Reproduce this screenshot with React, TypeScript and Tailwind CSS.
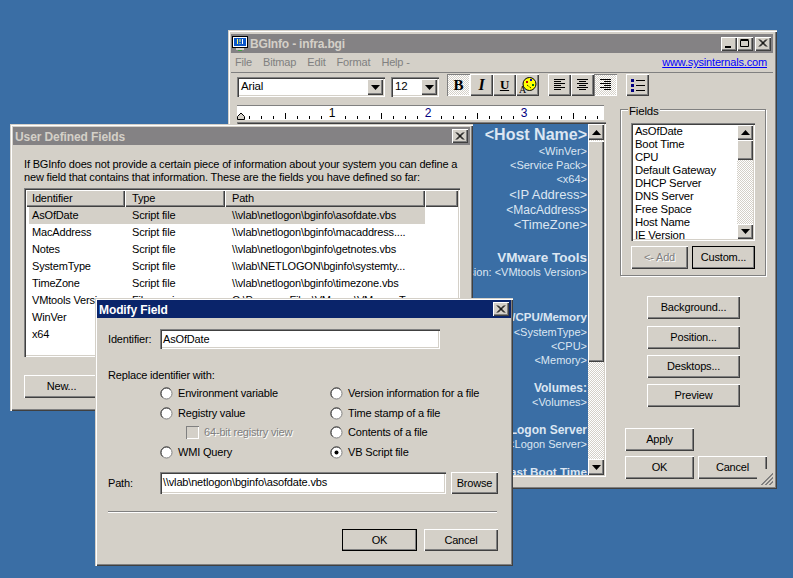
import type { ReactNode } from 'react';

const raised = 'bg-[#d4d0c8] shadow-[inset_1px_1px_0_#fff,inset_-1px_-1px_0_#404040,inset_-2px_-2px_0_#808080]';
const sunken = 'bg-white shadow-[inset_1px_1px_0_#808080,inset_2px_2px_0_#404040,inset_-1px_-1px_0_#fff,inset_-2px_-2px_0_#d4d0c8]';
const frame = 'bg-[#d4d0c8] shadow-[inset_1px_1px_0_#d4d0c8,inset_2px_2px_0_#fff,inset_-1px_-1px_0_#404040,inset_-2px_-2px_0_#808080]';
const dither = 'bg-[repeating-conic-gradient(#d4d0c8_0_25%,#fff_0_50%)] bg-[length:2px_2px]';

function Button({ label, className = '', primary = false, disabled = false }: { label: string; className?: string; primary?: boolean; disabled?: boolean }) {
  return (
    <div className={`flex items-center justify-center ${raised} ${primary ? 'outline outline-1 -outline-offset-1 outline-black' : ''} ${disabled ? 'text-[#808080] [text-shadow:1px_1px_0_#fff]' : ''} ${className}`}>
      {label}
    </div>
  );
}

function Arrow({ down = false }: { down?: boolean }) {
  return (
    <svg width="9" height="5" viewBox="0 0 9 5" className={down ? 'rotate-180' : ''}>
      <path d="M4.5 0 L9 5 L0 5 Z" fill="#000" />
    </svg>
  );
}

function ArrowButton({ down = false, className = '' }: { down?: boolean; className?: string }) {
  return (
    <div className={`flex items-center justify-center ${raised} ${className}`}>
      <Arrow down={down} />
    </div>
  );
}

function Combo({ value, className }: { value: string; className: string }) {
  return (
    <div className={`flex items-center justify-between pl-[4px] pr-[2px] text-[11.5px] ${sunken} ${className}`}>
      <span>{value}</span>
      <ArrowButton down className="w-[16px] h-[16px]" />
    </div>
  );
}

function TitleButton({ kind }: { kind: 'min' | 'max' | 'close' }) {
  return (
    <div className={`flex items-center justify-center w-[16px] h-[14px] ${raised}`}>
      <svg width="10" height="9" viewBox="0 0 10 9" fill="none" stroke="#000">
        {kind === 'min' && <path d="M1 7.5 H7 M1 8.5 H7" />}
        {kind === 'max' && <path d="M0.5 1.5 H8.5 V7.5 H0.5 Z M0.5 0.5 H8.5" />}
        {kind === 'close' && <path d="M1 0.5 L8 7.5 M2 0.5 L9 7.5 M8 0.5 L1 7.5 M9 0.5 L2 7.5" />}
      </svg>
    </div>
  );
}

function TitleBar({ title, active = false }: { title: string; active?: boolean }) {
  return (
    <div className={`flex items-center h-[18px] pl-[2px] pr-[2px] ${active ? 'bg-[#0a246a] text-white' : 'bg-[#848284] text-[#d4d0c8]'}`}>
      <span className="font-bold text-[12px] tracking-[-0.1px] pt-[1px] flex-1">{title}</span>
    </div>
  );
}

function ToolButton({ children, pressed = false }: { children: ReactNode; pressed?: boolean }) {
  return (
    <div className={`flex items-center justify-center w-[23px] h-[22px] ${pressed ? `${dither} shadow-[inset_1px_1px_0_#808080,inset_-1px_-1px_0_#fff]` : raised}`}>
      {children}
    </div>
  );
}

function AlignIcon({ lines }: { lines: [number, number][] }) {
  return (
    <svg width="13" height="12" viewBox="0 0 13 12" stroke="#000">
      {lines.map(([a, b], i) => (
        <path key={i} d={`M${a} ${i * 2 + 0.5} H${b}`} />
      ))}
    </svg>
  );
}

function AppIcon() {
  return (
    <svg width="16" height="16" viewBox="0 0 16 16" className="mr-[2px]">
      <rect x="0.5" y="0.5" width="15" height="11" fill="#fff" stroke="#000" />
      <rect x="2" y="2" width="12" height="8" fill="#0a56c8" />
      <path d="M5.5 3 V8 M8 3 V6 M8 7 V8" stroke="#ffff66" />
      <path d="M10.5 3 V8" stroke="#fff" />
      <rect x="4" y="12" width="8" height="2" fill="#d4d0c8" />
      <rect x="6" y="14" width="4" height="1" fill="#40a040" />
    </svg>
  );
}

function Ruler() {
  const ticks = Array.from({ length: 31 }, (_, i) => i);
  return (
    <div className="relative h-[15px] w-[367px] bg-white border-t border-[#808080]">
      <svg width="367" height="14" className="block">
        {ticks.map((i) => {
          const x = i * 12 + 0.5;
          if (i % 8 === 0) return null;
          return <path key={i} d={i % 4 === 0 ? `M${x} 7 V13` : `M${x} 10 V13`} stroke="#000" />;
        })}
        <text x="95" y="11" fontSize="12" fill="#000" textAnchor="middle">1</text>
        <text x="191" y="11" fontSize="12" fill="#000080" textAnchor="middle">2</text>
        <text x="287" y="11" fontSize="12" fill="#000080" textAnchor="middle">3</text>
        <path d="M0.5 13.5 V10.5 L4 7 L7.5 10.5 V13.5 Z" fill="#d4d0c8" stroke="#000" />
      </svg>
    </div>
  );
}

const editorLines: [string, string][] = [
  ['<Host Name>', 'text-[16px] font-bold h-[19px]'],
  ['<WinVer>', 'text-[11px] h-[14px]'],
  ['<Service Pack>', 'text-[11px] h-[14px]'],
  ['<x64>', 'text-[11px] h-[14px]'],
  ['<IP Address>', 'text-[13px] h-[16px]'],
  ['<MacAddress>', 'text-[12px] h-[15px]'],
  ['<TimeZone>', 'text-[13px] h-[14px]'],
  ['', 'h-[19px]'],
  ['VMware Tools', 'text-[13.5px] font-bold h-[15px]'],
  ['Version: <VMtools Version>', 'text-[11px] h-[14px]'],
  ['', 'h-[32px]'],
  ['Hardware/CPU/Memory', 'text-[11.5px] font-bold h-[14px]'],
  ['<SystemType>', 'text-[11px] h-[14px]'],
  ['<CPU>', 'text-[11px] h-[14px]'],
  ['<Memory>', 'text-[11px] h-[14px]'],
  ['', 'h-[13px]'],
  ['Volumes:', 'text-[12px] font-bold h-[15px]'],
  ['<Volumes>', 'text-[11px] h-[14px]'],
  ['', 'h-[13px]'],
  ['Logon Server', 'text-[12px] font-bold h-[15px]'],
  ['<Logon Server>', 'text-[11px] h-[14px]'],
  ['', 'h-[14px]'],
  ['Last Boot Time', 'text-[11.7px] font-bold h-[14px]'],
];

const fields = ['AsOfDate', 'Boot Time', 'CPU', 'Default Gateway', 'DHCP Server', 'DNS Server', 'Free Space', 'Host Name', 'IE Version'];

function MainWindow() {
  return (
    <div className={`absolute left-[228px] top-[30px] w-[549px] h-[459px] pl-[3px] pt-[3px] pr-[4px] pb-[3px] ${frame}`}>
      <div className="flex items-center bg-[#848284] text-[#d4d0c8] h-[19px] pl-[1px] pr-[2px] mt-[1px]">
        <AppIcon />
        <span className="font-bold text-[12px] flex-1">BGInfo - infra.bgi</span>
        <TitleButton kind="min" />
        <TitleButton kind="max" />
        <div className="ml-[2px]"><TitleButton kind="close" /></div>
      </div>
      <div className="flex items-center h-[20px] pl-[4px] pr-[6px] border-b border-[#808080] text-[#808080] gap-[11px]">
        <span>File</span>
        <span>Bitmap</span>
        <span>Edit</span>
        <span>Format</span>
        <span className="flex-1">Help -</span>
        <span className="text-[#0000ff] underline">www.sysinternals.com</span>
      </div>
      <div className="flex items-start mt-[1px] h-[24px] pl-[6px]">
        <Combo value="Arial" className="w-[148px] h-[20px] mt-[3px]" />
        <Combo value="12" className="w-[48px] h-[20px] ml-[6px] mt-[3px]" />
        <div className="flex ml-[8px]">
          <ToolButton pressed><span className="font-['Liberation_Serif'] font-bold text-[15px]">B</span></ToolButton>
          <ToolButton><span className="font-['Liberation_Serif'] font-bold italic text-[16px]">I</span></ToolButton>
          <ToolButton><span className="font-['Liberation_Serif'] font-bold underline text-[13px]">U</span></ToolButton>
          <ToolButton>
            <svg width="18" height="17" viewBox="0 0 18 17">
              <circle cx="10.5" cy="7" r="6.5" fill="#ffff00" stroke="#000" />
              <path d="M7 4 h2 v2 h-2 z" fill="#c00000" />
              <path d="M11 2 h2 v2 h-2 z" fill="#0000c0" />
              <path d="M13 7 h2 v2 h-2 z" fill="#008000" />
              <path d="M8 8 L12 11" stroke="#000" strokeDasharray="1 1" />
              <text x="0" y="16" fontSize="10" fill="#000" fontFamily="Liberation Serif">A</text>
            </svg>
          </ToolButton>
        </div>
        <div className="flex ml-[9px]">
          <ToolButton><AlignIcon lines={[[1, 12], [1, 8], [1, 12], [1, 8], [1, 12], [1, 8]]} /></ToolButton>
          <ToolButton><AlignIcon lines={[[1, 12], [3, 10], [1, 12], [3, 10], [1, 12], [3, 10]]} /></ToolButton>
          <ToolButton pressed><AlignIcon lines={[[1, 12], [5, 12], [1, 12], [5, 12], [1, 12], [5, 12]]} /></ToolButton>
        </div>
        <div className="ml-[9px]">
          <ToolButton>
            <svg width="14" height="13" viewBox="0 0 14 13">
              <path d="M0 0 H3 V3 H0 Z M0 5 H3 V8 H0 Z M0 10 H3 V13 H0 Z" fill="#000080" />
              <path d="M5 1.5 H14 M5 6.5 H14 M5 11.5 H14" stroke="#000" />
            </svg>
          </ToolButton>
        </div>
      </div>
      <div className="flex pl-[6px] mt-[7px]">
        <div className="flex flex-col">
          <Ruler />
          <div className={`mt-[2px] w-[369px] h-[355px] p-[2px] flex ${sunken}`}>
            <div className="flex-1 bg-[#3a6ea5] text-[#dce6f2] overflow-hidden text-right pr-[1px] pt-[1px] tracking-normal">
              {editorLines.map(([text, cls], i) => (
                <div key={i} className={`whitespace-nowrap leading-none flex items-center justify-end ${cls}`}>{text}</div>
              ))}
            </div>
            <div className="w-[16px] flex flex-col bg-[#d4d0c8]">
              <ArrowButton className="h-[16px]" />
              <div className={`flex-1 flex flex-col pt-[1px] ${dither}`}>
                <div className={`h-[221px] ${raised}`} />
              </div>
              <ArrowButton down className="h-[16px]" />
            </div>
          </div>
        </div>
        <div className="flex flex-col ml-[14px] w-[147px] mt-[4px]">
          <div className="relative border border-[#808080] shadow-[1px_1px_0_#fff,inset_1px_1px_0_#fff] w-[146px] h-[167px] px-[10px]">
            <span className="absolute left-[7px] -top-[5px] px-[1px] bg-[#d4d0c8] leading-[13px] text-[11.5px]">Fields</span>
            <div className={`flex w-[124px] h-[118px] p-[2px] mt-[13px] ${sunken}`}>
              <div className="flex-1 overflow-hidden pl-[2px] text-[11.3px]">
                {fields.map((f) => (
                  <div key={f} className="h-[13px] leading-[13px] whitespace-nowrap">{f}</div>
                ))}
              </div>
              <div className="w-[16px] flex flex-col">
                <ArrowButton className="h-[15px]" />
                <div className={`flex-1 ${dither}`}>
                  <div className={`h-[20px] ${raised}`} />
                </div>
                <ArrowButton down className="h-[15px]" />
              </div>
            </div>
            <div className="flex gap-[4px] mt-[5px]">
              <Button label="<- Add" disabled className="w-[57px] h-[23px]" />
              <Button label="Custom..." primary className="w-[63px] h-[23px]" />
            </div>
          </div>
          <div className="flex flex-col gap-[6px] mt-[20px] ml-[27px]">
            <Button label="Background..." className="w-[93px] h-[23px] mb-[1px]" />
            <Button label="Position..." className="w-[93px] h-[23px]" />
            <Button label="Desktops..." className="w-[93px] h-[23px]" />
            <Button label="Preview" className="w-[93px] h-[23px]" />
          </div>
          <div className="mt-[21px] ml-[5px]">
            <Button label="Apply" className="w-[69px] h-[23px]" />
            <div className="flex gap-[4px] mt-[5px]">
              <Button label="OK" className="w-[69px] h-[23px]" />
              <Button label="Cancel" className="w-[69px] h-[23px]" />
            </div>
          </div>
        </div>
      </div>
      <svg width="17" height="17" viewBox="0 0 17 17" className="absolute right-[3px] bottom-[3px] bg-[#d4d0c8]" stroke="#808080">
        <path d="M16 4 L4 16 M16 5 L5 16 M16 8 L8 16 M16 9 L9 16 M16 12 L12 16 M16 13 L13 16" />
      </svg>
    </div>
  );
}

const rows = [
  ['AsOfDate', 'Script file', '\\\\vlab\\netlogon\\bginfo\\asofdate.vbs'],
  ['MacAddress', 'Script file', '\\\\vlab\\netlogon\\bginfo\\macaddress....'],
  ['Notes', 'Script file', '\\\\vlab\\netlogon\\bginfo\\getnotes.vbs'],
  ['SystemType', 'Script file', '\\\\vlab\\NETLOGON\\bginfo\\systemty...'],
  ['TimeZone', 'Script file', '\\\\vlab\\netlogon\\bginfo\\timezone.vbs'],
  ['VMtools Version', 'File version', 'C:\\Program Files\\VMware\\VMware To...'],
  ['WinVer', 'Script file', '\\\\vlab\\netlogon\\bginfo\\winver.vbs'],
  ['x64', 'Script file', '\\\\vlab\\netlogon\\bginfo\\x64.vbs'],
];

function UserFieldsWindow() {
  return (
    <div className={`absolute left-[10px] top-[124px] w-[463px] h-[287px] p-[3px] ${frame}`}>
      <div className="relative">
        <TitleBar title="User Defined Fields" />
        <div className="absolute right-[2px] top-[2px]"><TitleButton kind="close" /></div>
      </div>
      <div className="pl-[11px] pt-[13px] leading-[13px]">
        <p className="whitespace-nowrap">If BGInfo does not provide a certain piece of information about your system you can define a</p>
        <p className="whitespace-nowrap">new field that contains that information. These are the fields you have defined so far:</p>
        <div className={`mt-[4px] w-[436px] h-[169px] p-[2px] ${sunken}`}>
          <div className="grid grid-cols-[99px_100px_200px_1fr] h-[17px] leading-[16px]">
            <div className={`pl-[6px] ${raised}`}>Identifier</div>
            <div className={`pl-[7px] ${raised}`}>Type</div>
            <div className={`pl-[7px] ${raised}`}>Path</div>
            <div className={raised} />
          </div>
          {rows.map((r, i) => (
            <div key={r[0]} className="grid grid-cols-[99px_100px_200px] h-[17px] leading-[17px] w-[399px]">
              <div className={`ml-[3px] pl-[3px] overflow-hidden whitespace-nowrap ${i === 0 ? 'bg-[#d4d0c8]' : ''}`}>{r[0]}</div>
              <div className={`pl-[7px] overflow-hidden whitespace-nowrap ${i === 0 ? 'bg-[#d4d0c8]' : ''}`}>{r[1]}</div>
              <div className={`pl-[7px] overflow-hidden whitespace-nowrap ${i === 0 ? 'bg-[#d4d0c8]' : ''}`}>{r[2]}</div>
            </div>
          ))}
        </div>
        <Button label="New..." className="mt-[18px] w-[75px] h-[23px]" />
      </div>
    </div>
  );
}

function Radio({ label, checked = false }: { label: string; checked?: boolean }) {
  return (
    <div className="flex items-center h-[13px] gap-[5px]">
      <svg width="13" height="13" viewBox="0 0 13 13">
        <circle cx="6.5" cy="6.5" r="5.5" fill="#fff" stroke="#808080" />
        <path d="M2.5 10.5 A5.5 5.5 0 0 1 10.5 2.5" fill="none" stroke="#404040" />
        {checked && <circle cx="6.5" cy="6.5" r="2" fill="#000" />}
      </svg>
      <span className="whitespace-nowrap">{label}</span>
    </div>
  );
}

function ModifyWindow() {
  return (
    <div className={`absolute left-[95px] top-[298px] w-[418px] h-[268px] p-[2px] ${frame}`}>
      <div className="relative">
        <TitleBar title="Modify Field" active />
        <div className="absolute right-[2px] top-[2px]"><TitleButton kind="close" /></div>
      </div>
      <div className="px-[11px]">
        <div className="flex items-center mt-[11px] h-[20px]">
          <span className="w-[52px]">Identifier:</span>
          <div className={`w-[280px] h-[20px] leading-[20px] pl-[3px] ${sunken}`}>AsOfDate</div>
        </div>
        <div className="mt-[20px] leading-[13px]">Replace identifier with:</div>
        <div className="grid grid-cols-[170px_1fr] ml-[52px] mt-[1px]">
          <div className="flex flex-col">
            <div className="h-[20px] flex items-center"><Radio label="Environment variable" /></div>
            <div className="h-[20px] flex items-center"><Radio label="Registry value" /></div>
            <div className="h-[19px] flex items-center pl-[26px] gap-[5px] text-[#808080] [text-shadow:1px_1px_0_#fff]">
              <div className="w-[13px] h-[13px] bg-[#d4d0c8] shadow-[inset_1px_1px_0_#808080,inset_-1px_-1px_0_#fff]" />
              <span>64-bit registry view</span>
            </div>
            <div className="h-[20px] flex items-center"><Radio label="WMI Query" /></div>
          </div>
          <div className="flex flex-col">
            <div className="h-[20px] flex items-center"><Radio label="Version information for a file" /></div>
            <div className="h-[20px] flex items-center"><Radio label="Time stamp of a file" /></div>
            <div className="h-[19px] flex items-center"><Radio label="Contents of a file" /></div>
            <div className="h-[20px] flex items-center"><Radio label="VB Script file" checked /></div>
          </div>
        </div>
        <div className="flex items-center mt-[10px] h-[22px]">
          <span className="w-[52px]">Path:</span>
          <div className={`w-[286px] h-[22px] leading-[20px] pl-[3px] ${sunken}`}>{'\\\\vlab\\netlogon\\bginfo\\asofdate.vbs'}</div>
          <Button label="Browse" className="w-[47px] h-[22px] ml-[5px]" />
        </div>
        <div className="mt-[17px] w-[389px] h-[2px] bg-[#808080] border-b border-white" />
        <div className="flex justify-end gap-[7px] mt-[16px] w-[390px]">
          <Button label="OK" primary className="w-[75px] h-[22px]" />
          <Button label="Cancel" className="w-[74px] h-[22px]" />
        </div>
      </div>
    </div>
  );
}

export default function App() {
  return (
    <div className="relative w-[793px] h-[578px] overflow-hidden bg-[#3a6ea5] text-black text-[11px] tracking-[-0.17px] font-['Liberation_Sans',sans-serif]">
      <MainWindow />
      <UserFieldsWindow />
      <ModifyWindow />
    </div>
  );
}
